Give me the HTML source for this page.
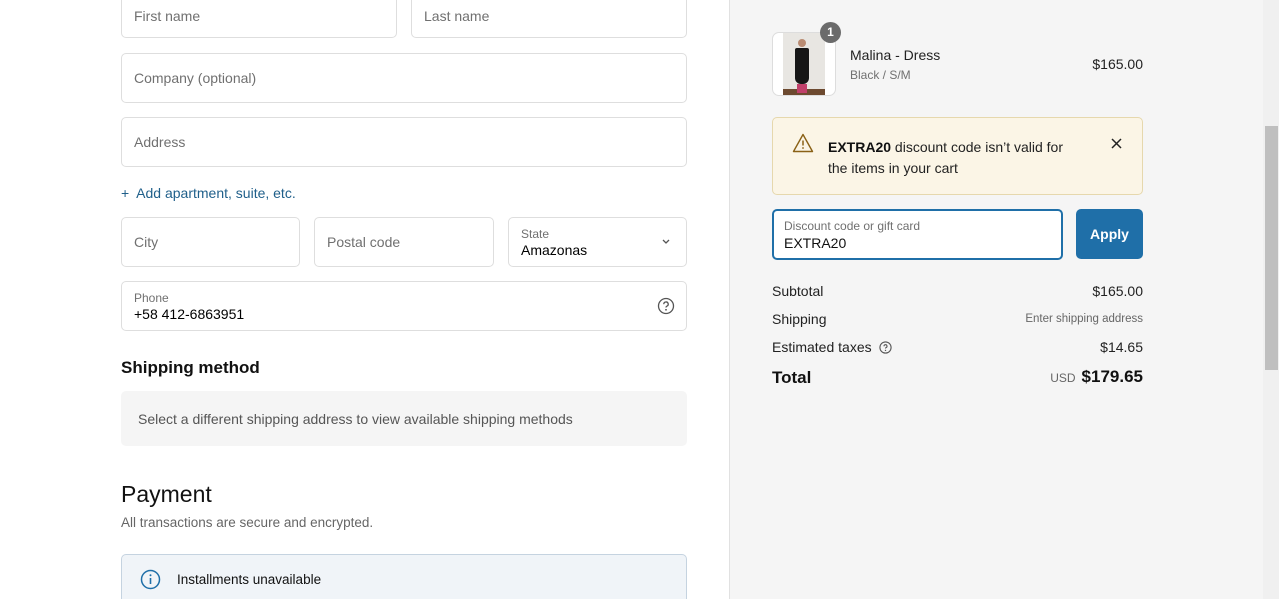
<!DOCTYPE html>
<html><head><meta charset="utf-8"><style>
*{box-sizing:border-box;margin:0;padding:0}
html,body{width:1279px;height:599px;overflow:hidden}
body{background:#fff;font-family:"Liberation Sans",sans-serif;color:#000;position:relative}
.a{position:absolute}
.f{position:absolute;border:1px solid #dedede;border-radius:5px;background:#fff}
.ph{position:absolute;left:12px;top:50%;transform:translateY(-50%);font-size:14px;color:#707070}
.lb{position:absolute;left:12px;top:9px;font-size:12px;color:#707070}
.vl{position:absolute;left:12px;top:24px;font-size:14px;color:#000}
.r{position:absolute;font-size:14px;color:#222}
</style></head><body>
<div class="f" style="left:121px;top:-12px;width:276px;height:50px"><span class="ph" style="top:27px">First name</span></div>
<div class="f" style="left:411px;top:-12px;width:276px;height:50px"><span class="ph" style="top:27px">Last name</span></div>
<div class="f" style="left:121px;top:53px;width:566px;height:50px"><span class="ph">Company (optional)</span></div>
<div class="f" style="left:121px;top:117px;width:566px;height:50px"><span class="ph">Address</span></div>
<div class="a" style="left:121px;top:185px;font-size:14px;color:#1f5f8a">+&nbsp; Add apartment, suite, etc.</div>
<div class="f" style="left:121px;top:217px;width:179px;height:50px"><span class="ph">City</span></div>
<div class="f" style="left:314px;top:217px;width:180px;height:50px"><span class="ph">Postal code</span></div>
<div class="f" style="left:508px;top:217px;width:179px;height:50px"><span class="lb">State</span><span class="vl">Amazonas</span>
<svg class="a" style="left:152px;top:20px" width="10" height="8" viewBox="0 0 10 8"><path d="M2 2l3 3 3-3" fill="none" stroke="#555" stroke-width="1.3"/></svg></div>
<div class="f" style="left:121px;top:281px;width:566px;height:50px"><span class="lb">Phone</span><span class="vl">+58 412-6863951</span>
<svg class="a" style="left:535px;top:15px" width="18" height="18" viewBox="0 0 18 18"><circle cx="9" cy="9" r="7.5" fill="none" stroke="#555" stroke-width="1.3"/><path d="M6.8 7.2a2.2 2.2 0 1 1 3 2c-.6.3-.8.7-.8 1.3" fill="none" stroke="#555" stroke-width="1.3"/><circle cx="9" cy="12.8" r=".9" fill="#555"/></svg></div>
<div class="a" style="left:121px;top:358px;font-size:17px;font-weight:bold;color:#111">Shipping method</div>
<div class="a" style="left:121px;top:391px;width:566px;height:55px;background:#f5f5f5;border-radius:5px"><span class="a" style="left:17px;top:20px;font-size:14px;color:#555">Select a different shipping address to view available shipping methods</span></div>
<div class="a" style="left:121px;top:481px;font-size:23px;color:#111">Payment</div>
<div class="a" style="left:121px;top:515px;font-size:13.5px;color:#666">All transactions are secure and encrypted.</div>
<div class="a" style="left:121px;top:554px;width:566px;height:50px;background:#f0f4f8;border:1px solid #c5d3e0;border-bottom:none;border-radius:5px 5px 0 0">
<svg class="a" style="left:18px;top:14px" width="21" height="21" viewBox="0 0 21 21"><circle cx="10.5" cy="10.5" r="9" fill="none" stroke="#1f6fa8" stroke-width="1.5"/><path d="M10.5 9v6" stroke="#1f6fa8" stroke-width="1.6"/><circle cx="10.5" cy="6.3" r="1" fill="#1f6fa8"/></svg>
<span class="a" style="left:55px;top:17px;font-size:13.5px;color:#111">Installments unavailable</span></div>

<div class="a" style="left:729px;top:0;width:550px;height:599px;background:#f5f5f5;border-left:1px solid #e1e1e1"></div>
<div class="a" style="left:1263px;top:0;width:16px;height:599px;background:#f0f0f0"></div>
<div class="a" style="left:1265px;top:126px;width:13px;height:244px;background:#bfbfbf"></div>

<div class="a" style="left:772px;top:32px;width:64px;height:64px;border:1px solid #ddd;border-radius:7px;background:#fff;overflow:hidden">
<div class="a" style="left:10px;top:0;width:42px;height:56px;background:#e8e6e2"></div>
<div class="a" style="left:10px;top:56px;width:42px;height:8px;background:#6d4a30"></div>
<div class="a" style="left:25px;top:6px;width:8px;height:8px;border-radius:50%;background:#b98b72"></div>
<div class="a" style="left:22px;top:15px;width:14px;height:36px;background:#161616;border-radius:2px 2px 6px 6px"></div>
<div class="a" style="left:24px;top:51px;width:10px;height:9px;background:#c0406a"></div></div>
<div class="a" style="left:820px;top:22px;width:21px;height:21px;border-radius:50%;background:#6b6b6b;color:#fff;font-size:12px;font-weight:bold;text-align:center;line-height:21px">1</div>
<div class="a" style="left:850px;top:47px;font-size:14px;color:#222">Malina - Dress</div>
<div class="a" style="left:850px;top:68px;font-size:12px;color:#707070">Black / S/M</div>
<div class="a" style="left:1000px;top:56px;width:143px;text-align:right;font-size:14px;color:#222">$165.00</div>

<div class="a" style="left:772px;top:117px;width:371px;height:78px;background:#fbf5e6;border:1px solid #e6d8ad;border-radius:5px">
<svg class="a" style="left:19px;top:15px" width="22" height="20" viewBox="0 0 22 20"><path d="M11 1.5L20.5 18.5H1.5Z" fill="none" stroke="#8a6116" stroke-width="1.4" stroke-linejoin="round"/><path d="M11 7.5v5" stroke="#8a6116" stroke-width="1.5"/><circle cx="11" cy="15" r=".9" fill="#8a6116"/></svg>
<div class="a" style="left:55px;top:19px;width:250px;font-size:14px;line-height:21px;color:#222"><b style="color:#111">EXTRA20</b> discount code isn’t valid for the items in your cart</div>
<svg class="a" style="left:338px;top:20px" width="11" height="11" viewBox="0 0 11 11"><path d="M1 1l9 9M10 1l-9 9" stroke="#222" stroke-width="1.5"/></svg></div>

<div class="a" style="left:772px;top:209px;width:291px;height:51px;border:2px solid #1f6fa8;border-radius:5px;background:#fff">
<span class="a" style="left:10px;top:8px;font-size:12px;color:#707070">Discount code or gift card</span>
<span class="a" style="left:10px;top:24px;font-size:14px;color:#111">EXTRA20</span></div>
<div class="a" style="left:1076px;top:209px;width:67px;height:50px;background:#1f6fa8;border-radius:5px;color:#fff;font-weight:bold;font-size:14px;text-align:center;line-height:50px">Apply</div>

<div class="r" style="left:772px;top:283px">Subtotal</div><div class="r" style="left:1000px;top:283px;width:143px;text-align:right">$165.00</div>
<div class="r" style="left:772px;top:311px">Shipping</div><div class="r" style="left:950px;top:313px;width:193px;text-align:right;font-size:11.5px;color:#666">Enter shipping address</div>
<div class="r" style="left:772px;top:339px">Estimated taxes
<svg style="vertical-align:-2px;margin-left:3px" width="13" height="13" viewBox="0 0 13 13"><circle cx="6.5" cy="6.5" r="5.6" fill="none" stroke="#555" stroke-width="1.1"/><path d="M5 5.2a1.5 1.5 0 1 1 2 1.4c-.4.2-.5.5-.5.9" fill="none" stroke="#555" stroke-width="1.1"/><circle cx="6.5" cy="9.4" r=".7" fill="#555"/></svg></div>
<div class="r" style="left:1000px;top:339px;width:143px;text-align:right">$14.65</div>
<div class="a" style="left:772px;top:368px;font-size:17px;font-weight:bold;color:#111">Total</div>
<div class="a" style="left:950px;top:367px;width:193px;text-align:right;color:#111"><span style="font-size:12px;color:#666;margin-right:6px">USD</span><span style="font-size:17px;font-weight:bold">$179.65</span></div>
</body></html>
